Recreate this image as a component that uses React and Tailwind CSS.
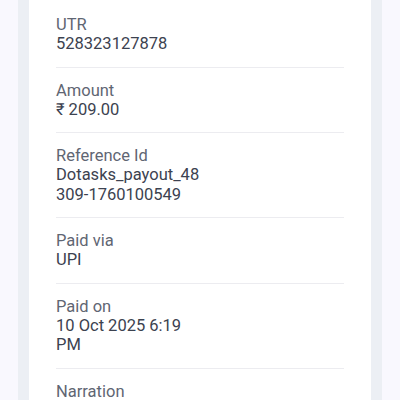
import React from 'react';

const rows = [
    { label: 'UTR', value: '528323127878' },
    { label: 'Amount', value: '₹ 209.00' },
    { label: 'Reference Id', value: 'Dotasks_payout_48309-1760100549' },
    { label: 'Paid via', value: 'UPI' },
    { label: 'Paid on', value: '10 Oct 2025 6:19 PM' },
    { label: 'Narration', value: 'Dotasks payout' },
];

const App = () => {
    return (
        <div className="h-[400px] overflow-hidden bg-[#f9f8fe] px-[18px]" style={{ fontFamily: 'Roboto, "Noto Sans", sans-serif' }}>
            <div className="h-full bg-[#eceff4] px-[11px]">
                <div className="h-full bg-white px-[27px]">
                    <div className="pt-[2px]">
                        {rows.map((row, i) => (
                            <div
                                key={row.label}
                                className={`py-[13px] ${i > 0 ? 'border-t border-[#ececf0]' : ''}`}
                            >
                                <div className="text-[16.5px] leading-[19.3px] text-[#5f6673]">{row.label}</div>
                                <div className="w-[150px] [overflow-wrap:anywhere] text-[16.5px] leading-[19.3px] text-[#3c4250]">
                                    {row.value}
                                </div>
                            </div>
                        ))}
                    </div>
                </div>
            </div>
        </div>
    );
};

export default App;
